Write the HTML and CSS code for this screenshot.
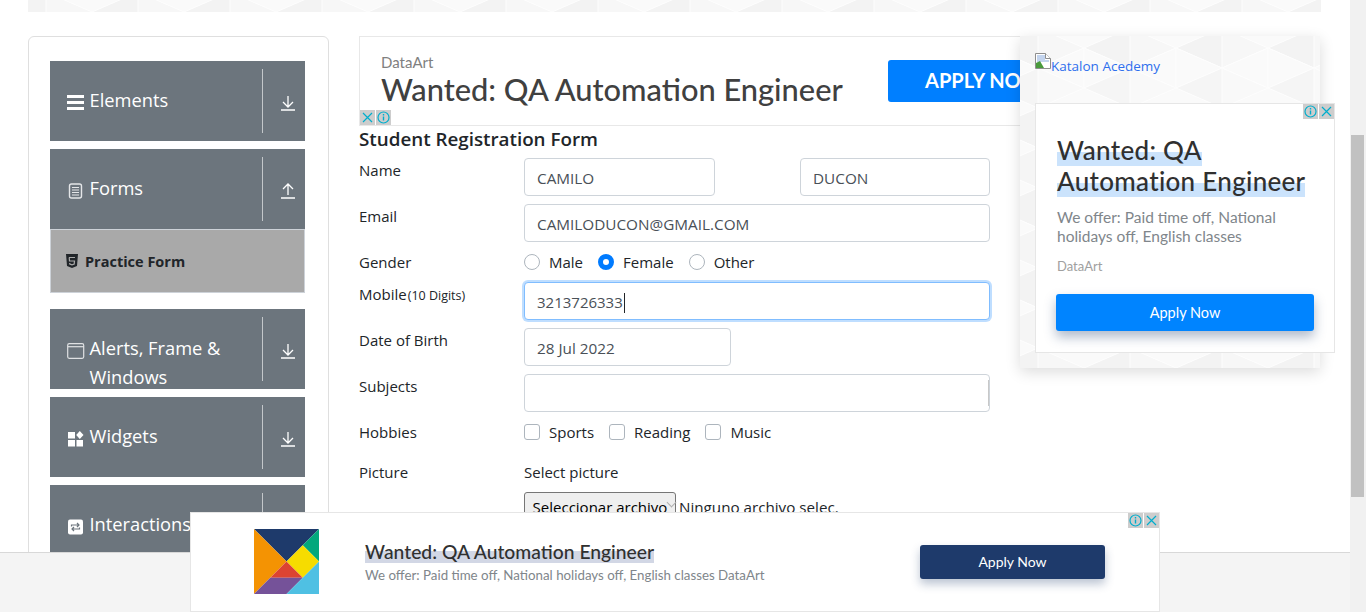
FILE: index.html
```html
<!DOCTYPE html>
<html>
<head>
  <meta charset="utf-8">
  <title>Student Registration Form</title>
  <link rel="stylesheet" href="styles.css">
</head>
<body>
<div class="page">
  <div class="content">
    <div class="strip">
      <svg class="pattern" width="100%" height="100%"><use href="#tri-fill"/></svg>
    </div>
    <div class="main">

      <div class="sidebar">
        <div class="group">
          <div class="group-title">
            <svg class="gicon" viewBox="0 0 18 18"><path d="M0 1h17v3H0zM0 7h17v3H0zM0 13h17v3H0z" fill="#fff"/></svg>
            <span>Elements</span>
          </div>
          <div class="group-arrow"><svg width="16" height="16" viewBox="0 0 16 16"><path d="M8 1v10M3 7l5 5 5-5M1 15h14" fill="none" stroke="#fff" stroke-width="1.3"/></svg></div>
        </div>
        <div class="group group-open">
          <div class="group-title">
            <svg class="gicon" viewBox="0 0 18 18"><rect x="2.500" y="2" width="12" height="14" rx="2" fill="none" stroke="#e4e6e8" stroke-width="1.4"/><path d="M5 5.500h7M5 8h7M5 10.500h7M5 13h7" stroke="#e4e6e8" stroke-width="1.100"/></svg>
            <span>Forms</span>
          </div>
          <div class="group-arrow"><svg width="16" height="16" viewBox="0 0 16 16"><path d="M8 12V2M3 6l5-5 5 5M1 15h14" fill="none" stroke="#fff" stroke-width="1.3"/></svg></div>
        </div>
        <div class="subitem">
          <svg width="14" height="14" viewBox="0 0 14 14"><path d="M1 0h12l-1 12-5 2-5-2z" fill="#212529"/><path d="M4 3.500h6M4.200 3.500l.3 3.500h5l-.3 3-2.200.8-2.200-.8-.1-1" fill="none" stroke="#a9a9a9" stroke-width="1.200"/></svg>
          <span>Practice Form</span>
        </div>
        <div class="group group-gap">
          <div class="group-title">
            <svg class="gicon" viewBox="0 0 18 18"><rect x=".7" y="1.700" width="16" height="14.600" rx="1.500" fill="none" stroke="#dfe1e3" stroke-width="1.200"/><path d="M1 4.700h16" stroke="#dfe1e3" stroke-width="1.200"/></svg>
            <span>Alerts, Frame &amp; Windows</span>
          </div>
          <div class="group-arrow"><svg width="16" height="16" viewBox="0 0 16 16"><path d="M8 1v10M3 7l5 5 5-5M1 15h14" fill="none" stroke="#fff" stroke-width="1.3"/></svg></div>
        </div>
        <div class="group">
          <div class="group-title">
            <svg class="gicon" viewBox="0 0 18 18"><path d="M1 2h7v6.500H1zM1 10h7v6.500H1zM9.500 10H16v6.500H9.500zM12.800 1l3.700 4-3.700 4-3.600-4z" fill="#fff"/></svg>
            <span>Widgets</span>
          </div>
          <div class="group-arrow"><svg width="16" height="16" viewBox="0 0 16 16"><path d="M8 1v10M3 7l5 5 5-5M1 15h14" fill="none" stroke="#fff" stroke-width="1.3"/></svg></div>
        </div>
        <div class="group">
          <div class="group-title">
            <svg class="gicon" viewBox="0 0 18 18"><rect x="1" y="1.500" width="15" height="15" rx="2" fill="#fff"/><path d="M4.500 8.500V7h7M10 5l2 2-2 2M12.500 9.500V11h-7M7 9l-2 2 2 2" fill="none" stroke="#6c757d" stroke-width="1.200"/></svg>
            <span>Interactions</span>
          </div>
          <div class="group-arrow"><svg width="16" height="16" viewBox="0 0 16 16"><path d="M8 1v10M3 7l5 5 5-5M1 15h14" fill="none" stroke="#fff" stroke-width="1.3"/></svg></div>
        </div>
      </div>

      <div class="center">
        <div class="top-ad">
          <div class="top-ad-text">
            <div class="top-ad-brand">DataArt</div>
            <div class="top-ad-title">Wanted: QA Automation Engineer</div>
          </div>
          <div class="top-ad-btn">APPLY NOW</div>
          <div class="ad-badges ad-badges-left">
            <span class="badge"><svg width="15" height="15" viewBox="0 0 15 15"><path d="M3 3l9 9M12 3l-9 9" stroke="#00aecd" stroke-width="1.200"/></svg></span>
            <span class="badge"><svg width="15" height="15" viewBox="0 0 15 15"><circle cx="7.500" cy="7.500" r="5.500" fill="none" stroke="#00aecd" stroke-width="1.200"/><path d="M7.500 6.500v4M7.500 4v1.500" stroke="#00aecd" stroke-width="1.400"/></svg></span>
          </div>
        </div>

        <h5 class="form-title">Student Registration Form</h5>

        <form class="form">
          <div class="row">
            <label class="lbl">Name</label>
            <div class="fields fields-name">
              <input class="input" type="text" value="CAMILO">
              <input class="input" type="text" value="DUCON">
            </div>
          </div>
          <div class="row">
            <label class="lbl">Email</label>
            <div class="fields"><input class="input" type="text" value="CAMILODUCON@GMAIL.COM"></div>
          </div>
          <div class="row row-choice">
            <label class="lbl">Gender</label>
            <div class="fields choices">
              <label class="choice"><input class="radio" type="radio" name="gender">Male</label>
              <label class="choice"><input class="radio" type="radio" name="gender" checked>Female</label>
              <label class="choice"><input class="radio" type="radio" name="gender">Other</label>
            </div>
          </div>
          <div class="row">
            <label class="lbl">Mobile<small>(10 Digits)</small></label>
            <div class="fields"><div class="input input-focus">3213726333<i class="caret"></i></div></div>
          </div>
          <div class="row">
            <label class="lbl">Date of Birth</label>
            <div class="fields"><input class="input input-date" type="text" value="28 Jul 2022"></div>
          </div>
          <div class="row">
            <label class="lbl">Subjects</label>
            <div class="fields"><input class="input input-subjects" type="text"></div>
          </div>
          <div class="row row-choice row-hobbies">
            <label class="lbl">Hobbies</label>
            <div class="fields choices">
              <label class="choice"><input class="check" type="checkbox">Sports</label>
              <label class="choice"><input class="check" type="checkbox">Reading</label>
              <label class="choice"><input class="check" type="checkbox">Music</label>
            </div>
          </div>
          <div class="row row-picture">
            <label class="lbl">Picture</label>
            <div class="fields picture">
              <div>Select picture</div>
              <div class="file-line"><button class="file-btn" type="button">Seleccionar archivo</button><span>Ninguno archivo selec.</span></div>
            </div>
          </div>
        </form>
      </div>
    </div>
  </div>
  <div class="scrollbar"><div class="thumb"></div></div>
</div>

<div class="footer-bar"></div>

<div class="side-panel">
  <svg class="pattern" width="100%" height="100%"><use href="#tri-fill"/></svg>
  <a class="katalon" href="#">
    <svg width="16" height="16" viewBox="0 0 16 16"><path d="M.5.500h10l5 5v10H.5z" fill="#fff" stroke="#8e8e8e"/><path d="M10.500.500v5h5" fill="#fff" stroke="#8e8e8e"/><path d="M2 2h8v5h4v2H2z" fill="#c3d4ee"/><path d="M1 15V10l4-2 4 7z" fill="#4a9a3c"/></svg>
    <span>Katalon Acedemy</span>
  </a>
  <div class="side-ad">
    <div class="ad-badges ad-badges-right">
      <span class="badge"><svg width="15" height="15" viewBox="0 0 15 15"><circle cx="7.500" cy="7.500" r="5.500" fill="none" stroke="#00aecd" stroke-width="1.200"/><path d="M7.500 6.500v4M7.500 4v1.500" stroke="#00aecd" stroke-width="1.400"/></svg></span>
      <span class="badge"><svg width="15" height="15" viewBox="0 0 15 15"><path d="M3 3l9 9M12 3l-9 9" stroke="#00aecd" stroke-width="1.200"/></svg></span>
    </div>
    <div class="side-title"><span>Wanted: QA</span><br><span>Automation Engineer</span></div>
    <div class="side-desc">We offer: Paid time off, National holidays off, English classes</div>
    <div class="side-brand">DataArt</div>
    <div class="side-btn">Apply Now</div>
  </div>
</div>

<div class="bottom-ad">
  <svg class="tangram" width="65" height="65" viewBox="0 0 65 65">
    <path d="M0 0h65L32.500 32.500z" fill="#1e3a6b"/>
    <path d="M65 0v32.500L48.750 16.250z" fill="#03a87c"/>
    <path d="M48.750 16.250L65 32.500 48.750 48.750 32.500 32.500z" fill="#f6dc00"/>
    <path d="M0 0l32.500 32.500L0 65z" fill="#f49303"/>
    <path d="M32.500 32.500l16.250 16.250H16.250z" fill="#dc4432"/>
    <path d="M16.250 48.750h32.500L32.500 65H0z" fill="#755299"/>
    <path d="M65 32.500V65H32.500z" fill="#4fc0e3"/>
  </svg>
  <div class="bottom-text">
    <div class="bottom-title"><span>Wanted: QA Automation Engineer</span></div>
    <div class="bottom-desc">We offer: Paid time off, National holidays off, English classes DataArt</div>
  </div>
  <div class="bottom-btn">Apply Now</div>
  <div class="ad-badges ad-badges-right">
    <span class="badge"><svg width="15" height="15" viewBox="0 0 15 15"><circle cx="7.500" cy="7.500" r="5.500" fill="none" stroke="#00aecd" stroke-width="1.200"/><path d="M7.500 6.500v4M7.500 4v1.500" stroke="#00aecd" stroke-width="1.400"/></svg></span>
    <span class="badge"><svg width="15" height="15" viewBox="0 0 15 15"><path d="M3 3l9 9M12 3l-9 9" stroke="#00aecd" stroke-width="1.200"/></svg></span>
  </div>
</div>

<svg class="defs" width="0" height="0">
  <defs>
    <pattern id="tri" width="92" height="80" patternUnits="userSpaceOnUse" patternTransform="translate(18 -8)">
      <g stroke="#fff" stroke-width="1">
        <path d="M0 0l46 20-46 20z" fill="#f6f6f6"/>
        <path d="M46 20v40L0 40z" fill="#fbfbfb"/>
        <path d="M0 40l46 20-46 20z" fill="#f9f9f9"/>
        <path d="M46 20l46-20v40z" fill="#f1f1f1"/>
        <path d="M46 20v40l46-20z" fill="#fafafa"/>
        <path d="M46 60l46-20v40z" fill="#f4f4f4"/>
      </g>
    </pattern>
    <rect id="tri-fill" width="100%" height="100%" fill="url(#tri)"/>
  </defs>
</svg>
</body>
</html>
```

FILE: styles.css
```css
* { box-sizing: border-box; }

html, body { margin: 0; padding: 0; height: 612px; overflow: hidden; }

body {
  font-family: "Open Sans", "Noto Sans", sans-serif;
  font-size: 15px;
  color: #212529;
  background: #fff;
}

.page { display: flex; height: 612px; }
.content { flex: 1; padding: 0 29px 0 28px; min-width: 0; }

.scrollbar { width: 16px; background: #f1f1f1; padding: 135px 2px 0 1px; }
.thumb { height: 362px; background: #c1c1c1; }

.pattern { position: absolute; top: 0; left: 0; opacity: .7; }
.defs { position: absolute; }

.strip { position: relative; height: 12px; background: #fafafa; overflow: hidden; }

.main { display: flex; gap: 30px; margin-top: 24px; }

/* left menu */
.sidebar {
  width: 301px;
  height: 560px;
  flex: none;
  border: 1px solid #dfdfdf;
  border-radius: 6px;
  padding: 24px 23px 0 21px;
}

.group {
  display: flex;
  height: 80px;
  margin-bottom: 8px;
  padding: 8px 0;
  background: #6c757d;
  color: #fff;
  overflow: hidden;
}
.group-open { margin-bottom: 0; }
.group-gap { margin-top: 16px; }

.group-title {
  flex: 1;
  display: flex;
  align-items: flex-start;
  margin-top: 16px;
  padding-left: 17px;
  font-size: 18.300px;
  line-height: 29px;
}
.gicon { width: 18px; height: 18px; flex: none; margin: 9px 4.500px 0 0; }

.group-arrow {
  width: 43px;
  border-left: 1px solid #c3c7ca;
  padding: 26px 0 0 17px;
}

.subitem {
  display: flex;
  align-items: center;
  gap: 6px;
  height: 64px;
  padding-left: 14px;
  background: #a9a9a9;
  border: 1px solid #cdd2d8;
  font-size: 14.500px;
  font-weight: 700;
}

/* center column */
.center { width: 631px; flex: none; position: relative; }

.top-ad {
  position: relative;
  display: flex;
  width: 728px;
  height: 90px;
  padding: 15px 0 0 21px;
  background: #fff;
  border: 1px solid #e8e8e8;
  border-right: 0;
}
.top-ad-text { width: 507px; flex: none; font-family: Lato, sans-serif; color: #404040; }
.top-ad-brand { font-size: 15px; line-height: 20px; color: #808080; }
.top-ad-title { font-size: 30.800px; line-height: 36px; font-weight: 500; white-space: nowrap; }
.top-ad-btn {
  width: 170px;
  height: 42px;
  margin-top: 8px;
  padding-left: 37px;
  background: #007fff;
  border-radius: 3px;
  color: #fff;
  font: 700 20px/41px Lato, sans-serif;
}

.ad-badges { position: absolute; display: flex; gap: 1px; }
.ad-badges-left { left: 0; bottom: 0; }
.ad-badges-right { right: 0; top: 0; }
.badge { display: block; width: 15px; height: 15px; background: #cdcdcd; }
.badge svg { display: block; }

.form-title {
  margin: 0;
  font-size: 18.800px;
  line-height: 26px;
  font-weight: 600;
}

.form { padding-top: 6px; }

.row { display: flex; margin-bottom: 8px; }
.lbl { width: 165px; flex: none; padding-top: 2px; line-height: 20px; }
.lbl small { font-size: 12.500px; margin-left: 1px; }

.fields { flex: 1; display: flex; min-width: 0; }
.fields-name { justify-content: space-between; }
.fields-name .input { width: 191px; }
.fields-name .input + .input { width: 190px; }

.input {
  display: block;
  width: 100%;
  height: 38px;
  padding: 2px 12px 0;
  background: #fff;
  border: 1px solid #ced4da;
  border-radius: 4px;
  color: #495057;
  font: 15.300px/34px "Open Sans", "Noto Sans", sans-serif;
}
.input-date { width: 207px; }
.input-subjects { background: linear-gradient(#c8c8c8, #c8c8c8) right center / 1px 26px no-repeat #fff; }
.input-focus {
  border-color: #80bdff;
  box-shadow: 0 0 0 2px rgba(0, 123, 255, .25);
  font-size: 15px;
}
.caret {
  display: inline-block;
  width: 1px;
  height: 20px;
  margin-left: 1px;
  vertical-align: -5px;
  background: #212529;
}

.row-choice { height: 24px; margin: 8px 0; align-items: center; }
.row-choice .lbl { padding-top: 0; }
.row-hobbies { margin: 8px 0 18px; }

.choices { gap: 15px; }
.choice { display: flex; align-items: center; gap: 9px; line-height: 24px; }

.radio, .check {
  appearance: none;
  width: 16px;
  height: 16px;
  margin: 0;
  background: #fff;
  border: 1px solid #adb5bd;
}
.radio { border-radius: 50%; }
.check { border-radius: 3px; }
.radio:checked { border: 5px solid #007bff; }

.picture { display: block; line-height: 20px; }
.row-picture .lbl { padding-top: 0; }
.file-line { display: flex; align-items: center; margin-top: 10px; white-space: nowrap; font-size: 15.200px; }
.file-btn {
  position: relative;
  width: 152px;
  height: 30px;
  padding: 0;
  margin-right: 3px;
  background: #efefef;
  border: 1px solid #767676;
  border-radius: 3px;
  color: #000;
  font: 15px "Open Sans", "Noto Sans", sans-serif;
}
.file-btn::after {
  content: "";
  position: absolute;
  right: 0;
  top: 6px;
  width: 6px;
  height: 6px;
  border-right: 1px solid #b0b0b0;
  border-bottom: 1px solid #b0b0b0;
  transform: rotate(45deg);
}

/* things fixed over the page */
.footer-bar {
  position: absolute;
  left: 0;
  bottom: 0;
  width: 1350px;
  height: 60px;
  background: #f4f4f4;
  border-top: 1px solid #d8d8d8;
}

.side-panel {
  position: absolute;
  left: 1020px;
  top: 36px;
  width: 300px;
  height: 332px;
  background: #fafafa;
  box-shadow: 0 4px 14px rgba(0, 0, 0, .14);
}
.katalon {
  position: absolute;
  left: 15px;
  top: 17px;
  display: flex;
  color: #2f6fed;
  font-size: 13.500px;
  line-height: 26px;
  text-decoration: none;
}
.katalon svg { flex: none; }

.side-ad {
  position: absolute;
  left: 15px;
  top: 67px;
  width: 300px;
  height: 250px;
  padding: 31px 20px 0 21px;
  background: #fff;
  border: 1px solid #e6e6e6;
  font-family: Lato, sans-serif;
}
.side-title { font-size: 26px; line-height: 31px; color: #303030; font-weight: 500; letter-spacing: .3px; }
.side-title span { background: linear-gradient(transparent 55%, #cbe3fc 55%); }
.side-desc { margin-top: 11px; font-size: 15.500px; line-height: 19px; color: #80868b; }
.side-brand { margin-top: 11px; font-size: 13px; line-height: 18px; color: #a0a0a0; }
.side-btn {
  margin-top: 19px;
  margin-left: -1px;
  height: 37px;
  background: #0084ff;
  border-radius: 3px;
  box-shadow: 0 6px 12px rgba(30, 58, 107, .35);
  color: #fff;
  font-size: 14.500px;
  line-height: 37px;
  text-align: center;
}

.bottom-ad {
  position: absolute;
  left: 190px;
  top: 512px;
  width: 970px;
  height: 100px;
  display: flex;
  align-items: center;
  background: #fff;
  border: 1px solid #e6e6e6;
  font-family: Lato, sans-serif;
}
.tangram { flex: none; margin: -2px 46px 0 63px; }
.bottom-text { width: 555px; flex: none; }
.bottom-title { font-size: 19.300px; line-height: 22px; color: #303030; font-weight: 500; }
.bottom-title span { background: linear-gradient(transparent 50%, #d2d7e5 50%); }
.bottom-desc { margin-top: 4px; font-size: 13.300px; line-height: 16px; color: #80868b; }
.bottom-btn {
  width: 185px;
  height: 34px;
  background: #1e3a6b;
  border-radius: 3px;
  box-shadow: 0 5px 10px rgba(30, 58, 107, .3);
  color: #fff;
  font-size: 14px;
  line-height: 33px;
  text-align: center;
}
```
